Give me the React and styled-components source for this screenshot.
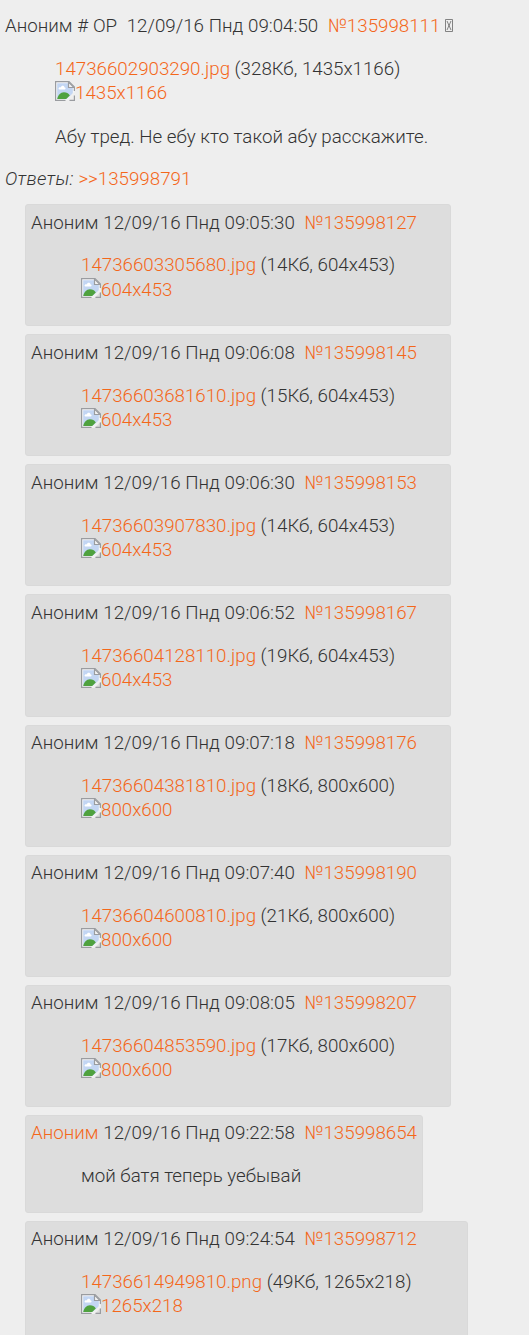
import styled, { createGlobalStyle } from "styled-components";

const replies = [
  { id: "135998127", time: "09:05:30", file: "14736603305680.jpg", weight: "14Кб", size: "604x453" },
  { id: "135998145", time: "09:06:08", file: "14736603681610.jpg", weight: "15Кб", size: "604x453" },
  { id: "135998153", time: "09:06:30", file: "14736603907830.jpg", weight: "14Кб", size: "604x453" },
  { id: "135998167", time: "09:06:52", file: "14736604128110.jpg", weight: "19Кб", size: "604x453" },
  { id: "135998176", time: "09:07:18", file: "14736604381810.jpg", weight: "18Кб", size: "800x600" },
  { id: "135998190", time: "09:07:40", file: "14736604600810.jpg", weight: "21Кб", size: "800x600" },
  { id: "135998207", time: "09:08:05", file: "14736604853590.jpg", weight: "17Кб", size: "800x600" },
  { id: "135998654", time: "09:22:58", mail: true, text: "мой батя теперь уебывай" },
  { id: "135998712", time: "09:24:54", file: "14736614949810.png", weight: "49Кб", size: "1265x218" },
];

function BrokenImage() {
  return (
    <Thumb viewBox="0 0 20 20">
      <path d="M.7.7H14l5.3 5.3v7L13 19.3H.7z" fill="#f4f6f8" />
      <path d="M2.200 2.200H13V7h4.800v6L12 17.800H2.200z" fill="#c3d6f3" />
      <path d="M3.500 8c0-1.600 1.400-2.200 2.200-1.600.8-2.400 3.600-2 3.900.2 1.300 0 1.300 1.800.3 1.800H4.200z" fill="#fff" />
      <path d="M2.200 17.900c.6-3.600 3.300-6.700 6.700-6.700 2.600 0 4.600 1.200 5.900 3.200l-3.600 3.500z" fill="#4fa23f" />
      <path d="M20 10V13.500L13.500 20H10z" fill="#f0f0f0" />
      <path d="M19.400 10V6L14 .6H.6v18.800H10.500M14.500 19.400h4.900V14.500" fill="none" stroke="#9a9ca0" strokeWidth="1.200" />
      <path d="M13.500 1v5.500H19z" fill="#f4f4f4" stroke="#9a9ca0" strokeWidth="1.200" />
    </Thumb>
  );
}

function Attachment({ file, weight, size }) {
  return (
    <div>
      <Line>
        <Link>{file}</Link> ({weight}, {size})
      </Line>
      <ImageLine>
        <BrokenImage />
        <Link>{size}</Link>
      </ImageLine>
    </div>
  );
}

function Reply({ post }) {
  return (
    <ReplyBox>
      <Header>
        {post.mail ? <Link>Аноним</Link> : "Аноним"} 12/09/16 Пнд {post.time}&nbsp; <Link>№{post.id}</Link>
      </Header>
      <Body>
        {post.file ? <Attachment {...post} /> : <Line>{post.text}</Line>}
      </Body>
    </ReplyBox>
  );
}

function App() {
  return (
    <Page>
      <GlobalStyle />
      <OpPost>
        <Header>
          Аноним # OP&nbsp; 12/09/16 Пнд 09:04:50&nbsp; <Link>№135998111</Link>{" "}
          <MissingGlyph viewBox="0 0 8 13">
            <path d="M.5.5h7v12h-7zM2 2l4 9M6 2l-4 9" />
          </MissingGlyph>
        </Header>
        <OpBody>
          <Attachment file="14736602903290.jpg" weight="328Кб" size="1435x1166" />
          <Message>Абу тред. Не ебу кто такой абу расскажите.</Message>
        </OpBody>
        <Line>
          <Label>Ответы:</Label> <Link>&gt;&gt;135998791</Link>
        </Line>
      </OpPost>
      <Thread>
        {replies.map((post) => (
          <Reply key={post.id} post={post} />
        ))}
      </Thread>
    </Page>
  );
}

export default App;

const GlobalStyle = createGlobalStyle`
  body {
    margin: 0;
    background: #eee;
    overflow: hidden;
  }
`;

const Page = styled.div`
  height: 1335px;
  overflow: hidden;
  box-sizing: border-box;
  padding: 14px 5px 0;
  font-family: Roboto, sans-serif;
  font-size: 18.74px;
  font-weight: 300;
  line-height: 24.4px;
  color: #333;
`;

const Line = styled.div`
  white-space: nowrap;
`;

const Header = styled(Line)`
  word-spacing: 0.2px;
`;

const Label = styled.em`
  letter-spacing: 0.3px;
`;

const Link = styled.a`
  color: #f4671a;
  cursor: pointer;
`;

const ImageLine = styled(Line)`
  display: flex;
`;

const Thumb = styled.svg`
  width: 20px;
  height: 20px;
  flex: none;
`;

const MissingGlyph = styled.svg`
  width: 8px;
  height: 13px;
  fill: none;
  stroke: #666;
  stroke-width: 0.8;
`;

const OpPost = styled.div`
  height: 190.2px;
`;

const OpBody = styled.div`
  margin: 18.6px 50px;
  margin-bottom: 18px;
`;

const Message = styled(Line)`
  margin-top: 19px;
`;

const Thread = styled.div`
  display: flex;
  flex-direction: column;
  align-items: flex-start;
  gap: 8px;
  padding-left: 20px;
`;

const ReplyBox = styled.div`
  box-sizing: border-box;
  padding: 5.4px 5px 4.8px;
  background: #ddd;
  border: 1px solid #d9d9d9;
  border-radius: 3px;
`;

const Body = styled.div`
  margin: 18.5px 50px 18.2px;
`;
